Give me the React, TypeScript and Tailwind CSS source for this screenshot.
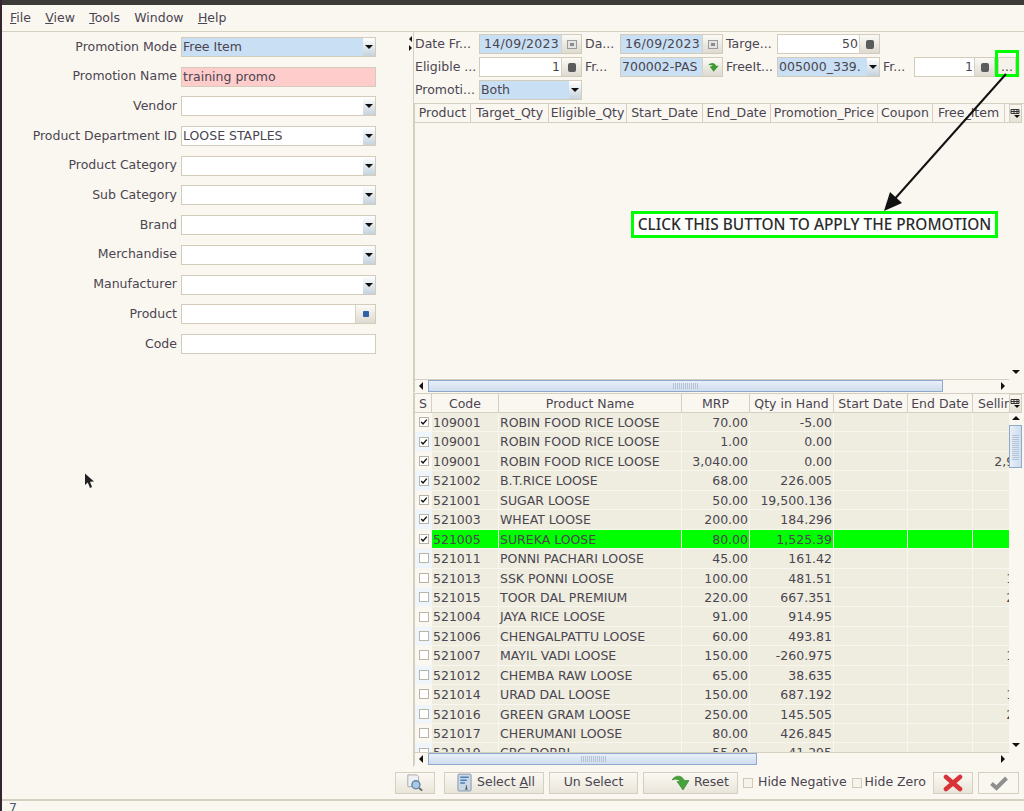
import type { ReactNode } from 'react';

const leftFields = [
  { label: 'Promotion Mode', kind: 'combo', value: 'Free Item', tone: 'bg-[#c9dff3]' },
  { label: 'Promotion Name', kind: 'text', value: 'training promo', tone: 'bg-[#ffcccc]' },
  { label: 'Vendor', kind: 'combo', value: '' },
  { label: 'Product Department ID', kind: 'combo', value: 'LOOSE STAPLES' },
  { label: 'Product Category', kind: 'combo', value: '' },
  { label: 'Sub Category', kind: 'combo', value: '' },
  { label: 'Brand', kind: 'combo', value: '' },
  { label: 'Merchandise', kind: 'combo', value: '' },
  { label: 'Manufacturer', kind: 'combo', value: '' },
  { label: 'Product', kind: 'lookup', value: '' },
  { label: 'Code', kind: 'text', value: '' },
];

const promoCols = [
  { name: 'Product', w: 'w-[56px]' },
  { name: 'Target_Qty', w: 'w-[78px]' },
  { name: 'Eligible_Qty', w: 'w-[78px]' },
  { name: 'Start_Date', w: 'w-[76px]' },
  { name: 'End_Date', w: 'w-[68px]' },
  { name: 'Promotion_Price', w: 'w-[107px]' },
  { name: 'Coupon', w: 'w-[55px]' },
  { name: 'Free_Item', w: 'w-[72px]' },
];

const rows = [
  { c: '109001', n: 'ROBIN FOOD RICE LOOSE', m: '70.00', q: '-5.00', s: '', on: true },
  { c: '109001', n: 'ROBIN FOOD RICE LOOSE', m: '1.00', q: '0.00', s: '', on: true },
  { c: '109001', n: 'ROBIN FOOD RICE LOOSE', m: '3,040.00', q: '0.00', s: '2,950.00', on: true },
  { c: '521002', n: 'B.T.RICE LOOSE', m: '68.00', q: '226.005', s: '', on: true },
  { c: '521001', n: 'SUGAR LOOSE', m: '50.00', q: '19,500.136', s: '', on: true },
  { c: '521003', n: 'WHEAT LOOSE', m: '200.00', q: '184.296', s: '', on: true },
  { c: '521005', n: 'SUREKA LOOSE', m: '80.00', q: '1,525.39', s: '', on: true, hit: true },
  { c: '521011', n: 'PONNI PACHARI LOOSE', m: '45.00', q: '161.42', s: '', on: false },
  { c: '521013', n: 'SSK PONNI LOOSE', m: '100.00', q: '481.51', s: '100.00', on: false },
  { c: '521015', n: 'TOOR DAL PREMIUM', m: '220.00', q: '667.351', s: '220.00', on: false },
  { c: '521004', n: 'JAYA RICE LOOSE', m: '91.00', q: '914.95', s: '', on: false },
  { c: '521006', n: 'CHENGALPATTU LOOSE', m: '60.00', q: '493.81', s: '', on: false },
  { c: '521007', n: 'MAYIL VADI LOOSE', m: '150.00', q: '-260.975', s: '150.00', on: false },
  { c: '521012', n: 'CHEMBA RAW LOOSE', m: '65.00', q: '38.635', s: '', on: false },
  { c: '521014', n: 'URAD DAL LOOSE', m: '150.00', q: '687.192', s: '150.00', on: false },
  { c: '521016', n: 'GREEN GRAM LOOSE', m: '250.00', q: '145.505', s: '250.00', on: false },
  { c: '521017', n: 'CHERUMANI LOOSE', m: '80.00', q: '426.845', s: '', on: false },
  { c: '521019', n: 'CBC DOBBI', m: '55.00', q: '41.295', s: '', on: false },
];

function Arrow({ dir }: { dir: 'up' | 'down' | 'left' | 'right' }) {
  const points = {
    up: '1,6 5,2 9,6',
    down: '1,3 9,3 5,7',
    left: '6,1 6,9 2,5',
    right: '3,1 3,9 7,5',
  }[dir];
  return (
    <svg viewBox="0 0 10 10" className="w-[10px] h-[10px]">
      <polygon points={points} fill="#111" />
    </svg>
  );
}

function SpinIcon() {
  return <span className="block w-[8px] h-[9px] rounded-[2px] bg-[#5b5b5b]" />;
}

function CalIcon() {
  return (
    <span className="flex items-center justify-center w-[10px] h-[9px] border border-[#9a9a9a] bg-[#e4e4e4]">
      <span className="block w-[4px] h-[3px] bg-[#8c8c8c]" />
    </span>
  );
}

function FieldButton({ children }: { children: ReactNode }) {
  return (
    <span className="flex items-center justify-center w-[20px] h-full shrink-0 border-l border-[#d8d2c4] bg-gradient-to-b from-[#fbfaf6] to-[#dedad0]">
      {children}
    </span>
  );
}

function Combo({ value, tone = 'bg-white' }: { value: string; tone?: string }) {
  return (
    <div className={`flex h-[20px] w-full border border-[#d3ccbb] ${tone}`}>
      <span className="flex-1 min-w-0 overflow-hidden whitespace-nowrap pl-[1px] leading-[18px]">{value}</span>
      <span className="flex items-center justify-center w-[12px] h-full shrink-0 bg-gradient-to-b from-white to-[#c5d3dd]">
        <Arrow dir="down" />
      </span>
    </div>
  );
}

function TextBox({ value, tone = 'bg-white', right, date, children }: { value: string; tone?: string; right?: boolean; date?: boolean; children?: ReactNode }) {
  return (
    <div className={`flex h-[20px] w-full border border-[#d3ccbb] ${tone}`}>
      <span className={`flex-1 min-w-0 overflow-hidden whitespace-nowrap leading-[18px] px-[1px] ${right ? 'text-right' : ''} ${date ? 'pl-[4px] tracking-[0.3px]' : ''}`}>{value}</span>
      {children}
    </div>
  );
}

function Label({ children }: { children: ReactNode }) {
  return <span className="whitespace-nowrap leading-[20px]">{children}</span>;
}

function HScroll({ thumb, grip }: { thumb: string; grip: string }) {
  return (
    <div className="flex h-[13px] shrink-0 bg-[#faf7f0] border-t border-[#d5cfc1]">
      <span className="flex items-center justify-center w-[13px]">
        <Arrow dir="left" />
      </span>
      <span className={`relative ${thumb} border border-[#8ea9cb] bg-gradient-to-b from-[#e8eff8] to-[#cfdded]`}>
        <span className={`absolute top-[2px] bottom-[2px] ${grip} w-[26px] bg-[repeating-linear-gradient(90deg,#b5c3d6_0px,#b5c3d6_1px,transparent_1px,transparent_2px)]`} />
      </span>
      <span className="flex-1" />
      <span className="flex items-center justify-center w-[13px]">
        <Arrow dir="right" />
      </span>
    </div>
  );
}

function CornerButton() {
  return (
    <span className="flex items-center justify-center h-[19px] shrink-0 border border-[#d5cfc1] bg-gradient-to-b from-[#fbf8f1] to-[#e5e1d6]">
      <svg viewBox="0 0 11 11" className="w-[11px] h-[11px]">
        <path d="M1 1.5h8v4H1zM1 3.5h8M4 1.5v4M7 1.5v4" fill="none" stroke="#333" strokeWidth="1" />
        <polygon points="4,7 10,7 7,10" fill="#111" />
      </svg>
    </span>
  );
}

function PromoTable() {
  return (
    <div className="flex h-[289px] mb-[1px] shrink-0 border-t border-[#d5cfc1]">
      <div className="flex flex-col w-[595px] border-l border-[#d5cfc1]">
        <div className="flex h-[19px] shrink-0 border-b border-[#d5cfc1] overflow-hidden">
          {promoCols.map((c) => (
            <span key={c.name} className={`${c.w} shrink-0 text-center leading-[18px] whitespace-nowrap border-r border-[#d5cfc1]`}>
              {c.name}
            </span>
          ))}
        </div>
        <div className="flex-1" />
        <HScroll thumb="w-[515px]" grip="left-[244px]" />
      </div>
      <div className="flex flex-col w-[13px]">
        <CornerButton />
        <div className="flex-1 flex flex-col justify-end items-center pb-[15px]">
          <Arrow dir="down" />
        </div>
      </div>
    </div>
  );
}

function Checkbox({ on }: { on: boolean }) {
  return (
    <span className="flex items-center justify-center w-[10px] h-[10px] border border-[#b9b4a6] bg-white">
      {on && (
        <svg viewBox="0 0 10 10" className="w-[8px] h-[8px]">
          <path d="M1.5 5l2.3 2.5L8.5 2" fill="none" stroke="#111" strokeWidth="1.8" />
        </svg>
      )}
    </span>
  );
}

function ProductTable() {
  const cell = 'shrink-0 overflow-hidden whitespace-nowrap leading-[19px] border-r border-[#f8f6ee]';
  const head = 'shrink-0 text-center leading-[20px] whitespace-nowrap overflow-hidden border-r border-[#d5cfc1]';
  return (
    <div className="flex h-[372px] shrink-0 border-t border-[#d5cfc1]">
      <div className="flex flex-col w-[595px] border-l border-[#d5cfc1]">
        <div className="flex h-[19px] shrink-0 border-b border-[#d5cfc1] overflow-hidden">
          <span className={`${head} w-[17px]`}>S</span>
          <span className={`${head} w-[67px]`}>Code</span>
          <span className={`${head} w-[183px]`}>Product Name</span>
          <span className={`${head} w-[68px]`}>MRP</span>
          <span className={`${head} w-[84px]`}>Qty in Hand</span>
          <span className={`${head} w-[74px]`}>Start Date</span>
          <span className={`${head} w-[65px]`}>End Date</span>
          <span className="w-[37px] shrink-0 pl-[5px] leading-[20px] whitespace-nowrap overflow-hidden">Selling Price</span>
        </div>
        <div className="flex-1 min-h-0 overflow-hidden">
          {rows.map((r, i) => (
            <div key={i} className={`flex h-[19.45px] border-b border-[#f8f6ee] ${r.hit ? 'bg-[#00ff00]' : 'bg-[#efede0]'}`}>
              <span className={`flex items-center justify-center w-[17px] shrink-0 ${i % 2 === 0 ? 'bg-[#fbf8f1]' : 'bg-[#eef5fb]'}`}>
                <Checkbox on={r.on} />
              </span>
              <span className={`${cell} w-[67px] pl-[1px]`}>{r.c}</span>
              <span className={`${cell} w-[183px] pl-[1px]`}>{r.n}</span>
              <span className={`${cell} w-[68px] pr-[1px] text-right`}>{r.m}</span>
              <span className={`${cell} w-[84px] pr-[1px] text-right`}>{r.q}</span>
              <span className={`${cell} w-[74px]`} />
              <span className={`${cell} w-[65px]`} />
              <span className="w-[37px] shrink-0 overflow-hidden">
                <span className="block w-[77px] text-right whitespace-nowrap leading-[19px]">{r.s}</span>
              </span>
            </div>
          ))}
        </div>
        <HScroll thumb="w-[329px]" grip="left-[152px]" />
      </div>
      <div className="flex flex-col w-[13px]">
        <CornerButton />
        <div className="flex justify-center h-[12px] items-center">
          <Arrow dir="up" />
        </div>
        <div className="relative h-[43px] border border-[#8ea9cb] bg-gradient-to-r from-[#e8eff8] to-[#cfdded]">
          <span className="absolute left-[2px] right-[2px] top-[8px] h-[26px] bg-[repeating-linear-gradient(0deg,#b5c3d6_0px,#b5c3d6_1px,transparent_1px,transparent_2px)]" />
        </div>
        <div className="flex-1 flex flex-col justify-end items-center pb-[15px]">
          <Arrow dir="down" />
        </div>
      </div>
    </div>
  );
}

function ActionButton({ className, children }: { className: string; children: ReactNode }) {
  return (
    <button className={`flex items-center h-[22px] shrink-0 border border-[#d5cfc1] bg-gradient-to-b from-[#fbf9f3] to-[#e9e5da] ${className}`}>
      {children}
    </button>
  );
}

export default function App() {
  return (
    <div className="relative flex flex-col h-[811px] w-[1024px] overflow-hidden bg-[#faf7f0] border-l-2 border-[#33262f] text-[12.5px] text-[#4a4550] font-['DejaVu_Sans',sans-serif]">
      <div className="h-[5px] shrink-0 -ml-[2px] bg-[#3c3b37]" />

      {/* Menu */}
      <div className="flex items-center h-[27px] shrink-0 border-b border-[#d5cfc1] pl-[8px] gap-[14.3px]">
        <span><u>F</u>ile</span>
        <span><u>V</u>iew</span>
        <span><u>T</u>ools</span>
        <span>Window</span>
        <span><u>H</u>elp</span>
      </div>

      <div className="flex h-[735px] shrink-0">
        {/* Left form */}
        <div className="flex flex-col w-[403px] shrink-0 gap-[9.7px] pt-[5px]">
          {leftFields.map((f) => (
            <div key={f.label} className="flex items-center">
              <span className="w-[175px] shrink-0 text-right whitespace-nowrap">{f.label}</span>
              <div className="w-[195px] ml-[4px] shrink-0">
                {f.kind === 'combo' && <Combo value={f.value} tone={f.tone} />}
                {f.kind === 'text' && <TextBox value={f.value} tone={f.tone} />}
                {f.kind === 'lookup' && (
                  <TextBox value="">
                    <FieldButton>
                      <span className="block w-[6px] h-[6px] rounded-[1px] bg-[#2f62a8]" />
                    </FieldButton>
                  </TextBox>
                )}
              </div>
            </div>
          ))}
        </div>

        {/* Splitter */}
        <div className="relative w-[9px] shrink-0 border-r border-[#d5cfc1]">
          <svg viewBox="0 0 5 16" className="absolute left-[3px] top-[4px] w-[5px] h-[16px]">
            <polygon points="4,0 4,6 1,3" fill="#111" />
            <polygon points="1,9 1,15 4,12" fill="#111" />
          </svg>
        </div>

        {/* Right side */}
        <div className="flex flex-col flex-1 min-w-0">
          <div className="grid grid-cols-[64px_103px_38px_103px_54px_103px_34px_81px_28px] grid-rows-[20px_20px_20px] gap-y-[3px] h-[71px] pt-[2px] pl-[1px]">
            <Label>Date Fr...</Label>
            <TextBox value="14/09/2023" tone="bg-[#c9dff3]" date>
              <FieldButton><CalIcon /></FieldButton>
            </TextBox>
            <span className="pl-[3px]"><Label>Da...</Label></span>
            <TextBox value="16/09/2023" tone="bg-[#c9dff3]" date>
              <FieldButton><CalIcon /></FieldButton>
            </TextBox>
            <span className="pl-[3px]"><Label>Targe...</Label></span>
            <TextBox value="50" right>
              <FieldButton><SpinIcon /></FieldButton>
            </TextBox>
            <span className="col-span-3" />

            <Label>Eligible ...</Label>
            <TextBox value="1" right>
              <FieldButton><SpinIcon /></FieldButton>
            </TextBox>
            <span className="pl-[3px]"><Label>Fr...</Label></span>
            <TextBox value="700002-PAS" tone="bg-[#c9dff3]">
              <FieldButton>
                <svg viewBox="0 0 10 10" className="w-[12px] h-[12px]">
                  <path d="M1 3.5C3 1 6.5 1 7.5 4L9.8 4 5.5 9 2.2 4.5 5 4.2C4 3.2 2.5 3 1 3.5Z" fill="#3b9a2f" />
                </svg>
              </FieldButton>
            </TextBox>
            <span className="pl-[3px]"><Label>FreeIt...</Label></span>
            <Combo value="005000_339." tone="bg-[#c9dff3]" />
            <span className="pl-[3px]"><Label>Fr...</Label></span>
            <TextBox value="1" right>
              <FieldButton><SpinIcon /></FieldButton>
            </TextBox>
            <div className="relative">
              <button className="absolute left-[3px] top-0 w-[18px] h-[20px] border border-[#d5cfc1] bg-[#f5f2e9] leading-[16px]">...</button>
              <span className="absolute left-0 -top-[7px] w-[24px] h-[27px] border-[3px] border-[#00ff00] pointer-events-none" />
            </div>

            <Label>Promoti...</Label>
            <Combo value="Both" tone="bg-[#c9dff3]" />
          </div>

          <PromoTable />
          <ProductTable />
        </div>
      </div>

      {/* Bottom actions */}
      <div className="flex items-center h-[34px] shrink-0 border-b-2 border-[#d5cfc1] pl-[393px] pr-[5px] pb-[1px]">
        <ActionButton className="w-[40px] justify-center">
          <svg viewBox="0 0 22 20" className="w-[20px] h-[18px]">
            <path d="M3 1h10l2 2v11H3z" fill="#eef0f2" stroke="#a5a5a5" />
            <circle cx="12" cy="12" r="4.5" fill="#a8c8e8" stroke="#5f7f9f" strokeWidth="1.4" />
            <path d="M15.5 15.5L19 18.5" stroke="#666" strokeWidth="2" />
          </svg>
        </ActionButton>
        <ActionButton className="w-[100px] ml-[9px] pl-[12px] gap-[5px]">
          <svg viewBox="0 0 16 20" className="w-[15px] h-[19px]">
            <rect x="1" y="1" width="14" height="18" rx="1" fill="#c9d7e6" stroke="#8595a5" />
            <path d="M3.5 4.5h9M3.5 7.5h7M3.5 10.5h5" stroke="#4d7fb5" strokeWidth="1.6" />
            <path d="M10 13v4M8.5 17h3" stroke="#444" strokeWidth="1" />
          </svg>
          <span>Select <u>A</u>ll</span>
        </ActionButton>
        <ActionButton className="w-[89px] ml-[5px] justify-center">Un Select</ActionButton>
        <ActionButton className="w-[95px] ml-[5px] pl-[27px] gap-[3px]">
          <svg viewBox="0 0 20 18" className="w-[20px] h-[18px]">
            <path d="M1 6C4 1 10.5 0.5 13.5 6.5L18 6.5 12 16 6 7.5 9.5 7.5C7.5 5 4.5 4.5 1 6Z" fill="#46a33a" stroke="#2e7d27" strokeWidth="0.6" />
          </svg>
          <span>Reset</span>
        </ActionButton>
        <span className="w-[10px] h-[10px] ml-[5px] border border-[#cfc9ba] bg-[#f6f3ea] shrink-0" />
        <span className="ml-[5px] whitespace-nowrap">Hide Negative</span>
        <span className="w-[10px] h-[10px] ml-[5px] border border-[#cfc9ba] bg-[#f6f3ea] shrink-0" />
        <span className="ml-[3px] whitespace-nowrap">Hide Zero</span>
        <span className="flex-1" />
        <ActionButton className="w-[40px] justify-center">
          <svg viewBox="0 0 20 18" className="w-[20px] h-[18px]">
            <path d="M3 3L17 15M17 3L3 15" stroke="#d9333a" strokeWidth="4.6" strokeLinecap="round" />
          </svg>
        </ActionButton>
        <ActionButton className="w-[41px] ml-[5px] justify-center !bg-none">
          <svg viewBox="0 0 20 16" className="w-[20px] h-[16px]">
            <path d="M2.5 8.5L7.5 13 17.5 3" fill="none" stroke="#8f8f8f" strokeWidth="4" />
          </svg>
        </ActionButton>
      </div>

      {/* Status */}
      <div className="flex-1 pl-[7px] text-[12.5px] leading-[14px] text-[#4a5a70]">7</div>

      {/* Annotation */}
      <svg viewBox="0 0 140 150" className="absolute left-[878px] top-[68px] w-[140px] h-[150px] pointer-events-none">
        <path d="M126 6L12 134" stroke="#111" strokeWidth="2" />
        <polygon points="4,143 10,124 22,135" fill="#111" />
      </svg>
      <div className="absolute left-[629px] top-[211px] w-[367px] h-[27px] border-[3px] border-[#00ff00] bg-white text-center text-[15.4px] font-medium leading-[21px] text-[#2c2c2c] whitespace-nowrap font-['Noto_Sans',sans-serif]">
        CLICK THIS BUTTON TO APPLY THE PROMOTION
      </div>
      <svg viewBox="0 0 12 16" className="absolute left-[82px] top-[473px] w-[12px] h-[16px] pointer-events-none">
        <path d="M1 0.5L1 12L3.8 9.5L6 15L8 14L6 8.8L10 8.5Z" fill="#222" />
      </svg>
    </div>
  );
}
